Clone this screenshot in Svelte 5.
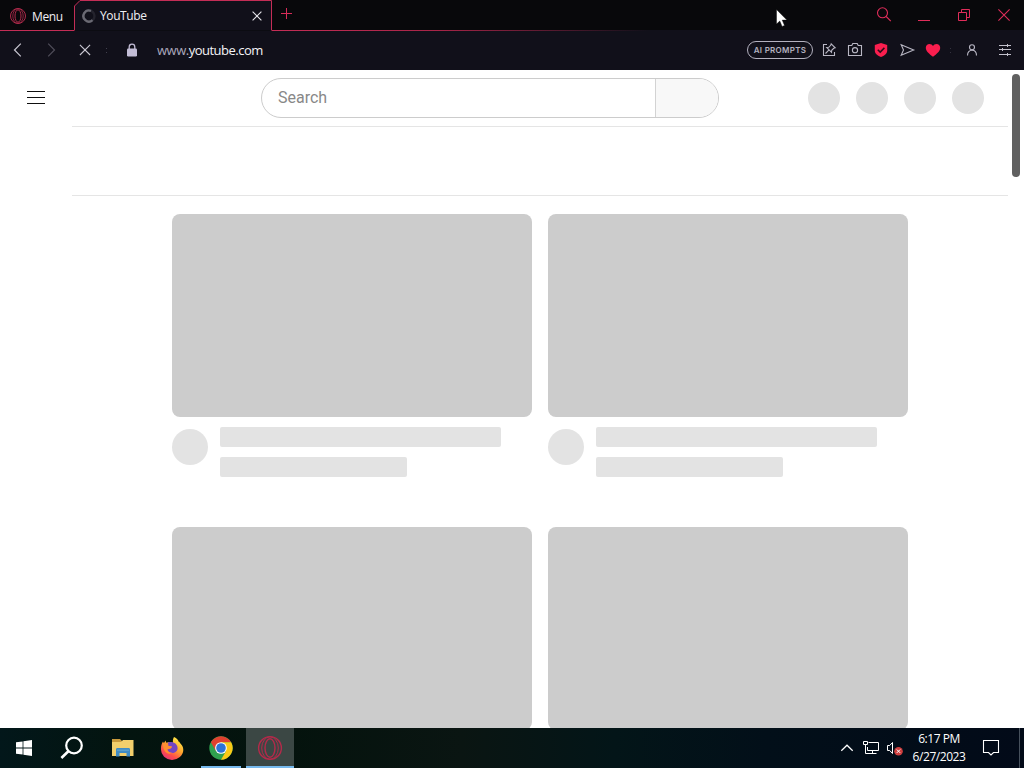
<script lang="ts">
  const videos = [1, 2, 3, 4];
  const headerButtons = [1, 2, 3, 4];
</script>

<div class="screen">
  <div class="tab-strip">
    <div class="menu">
      <svg width="18" height="18" viewBox="0 0 18 18" fill="none" stroke="#b02a4b">
        <circle cx="9" cy="9" r="7.5" />
        <ellipse cx="9" cy="9" rx="5.2" ry="7.3" stroke-width=".8" />
        <ellipse cx="9" cy="9" rx="3" ry="6.2" />
      </svg>
      <span>Menu</span>
    </div>
    <div class="tab">
      <svg class="outline" width="198" height="31" viewBox="0 0 198 31">
        <path d="M.5 30.5V6L6 .5h191.5v30" fill="#11101a" stroke="#c42d56" />
      </svg>
      <svg class="spinner" width="14" height="14" viewBox="0 0 14 14" fill="none" stroke-width="2.4">
        <circle cx="7" cy="7" r="5.5" stroke="#24232d" />
        <path d="M9 1.9A5.5 5.5 0 1 0 10.5 11.2" stroke="#6a6973" />
      </svg>
      <span class="tab-title">YouTube</span>
      <svg class="tab-close" width="10" height="10" viewBox="0 0 10 10" stroke="#e6e5ea" stroke-width="1.1">
        <path d="M.6.6l8.8 8.8M9.4.6L.6 9.4" />
      </svg>
    </div>
    <div class="strip-rest">
      <svg class="new-tab" width="12" height="12" viewBox="0 0 12 12" stroke="#d62c58">
        <path d="M5.5 0v11M0 5.5h11" />
      </svg>
      <div class="window-buttons">
        <svg width="16" height="16" viewBox="0 0 16 16" fill="none" stroke="#e02d5a" stroke-width="1.1">
          <circle cx="6.5" cy="5.8" r="5" />
          <path d="M10.2 9.500l4.600 4.600" />
        </svg>
        <svg width="16" height="16" viewBox="0 0 16 16" stroke="#e02d5a">
          <path d="M2 13.5h12" />
        </svg>
        <svg width="16" height="16" viewBox="0 0 16 16" fill="none" stroke="#e02d5a">
          <path d="M2.5 5.5h8v8h-8zM5.5 5.5v-3h8v8h-3" />
        </svg>
        <svg width="16" height="16" viewBox="0 0 16 16" stroke="#e02d5a" stroke-width="1.1">
          <path d="M2.4 2.4l11.2 11.2M13.6 2.4L2.4 13.6" />
        </svg>
      </div>
    </div>
  </div>

  <div class="toolbar">
    <div class="nav">
      <svg width="20" height="20" viewBox="0 0 20 20" fill="none" stroke="#c9c7d2" stroke-width="1.2">
        <path d="M12.8 3.7L6.5 10l6.3 6.3" />
      </svg>
      <svg width="20" height="20" viewBox="0 0 20 20" fill="none" stroke="#4f4d59" stroke-width="1.2">
        <path d="M7.2 3.7l6.3 6.3-6.3 6.3" />
      </svg>
      <svg width="20" height="20" viewBox="0 0 20 20" stroke="#c9c7d2" stroke-width="1.1">
        <path d="M5.9 4.8L16.100 15M16.100 4.800L5.900 15" />
      </svg>
    </div>
    <span class="dots"></span>
    <svg class="lock" width="12" height="14" viewBox="0 0 12 14">
      <path d="M3.2 6V3.9a2.8 2.8 0 0 1 5.6 0V6" fill="none" stroke="#c3bdd6" stroke-width="1.3" />
      <rect x="1" y="5.5" width="10" height="8" rx="1.2" fill="#c3bdd6" />
    </svg>
    <span class="url"><span class="www">www.</span>youtube.com</span>
    <span class="prompts">AI PROMPTS</span>
    <div class="actions">
      <svg width="20" height="20" viewBox="0 0 20 20" fill="none" stroke="#b9b7c4" stroke-width="1.1">
        <path d="M8 4.500H4.500v11h11V12" />
        <path d="M6.500 13.500l3.300-3.300M12.200 3.800l4 4-1.500.5-2 2-.2 2-4.800-4.800 2-.2 2-2z" />
      </svg>
      <svg width="20" height="20" viewBox="0 0 20 20" fill="none" stroke="#b9b7c4" stroke-width="1.1">
        <path d="M3.500 5.500h3.300l1-2h4.400l1 2h3.300v10h-13z" />
        <circle cx="10" cy="10.200" r="2.600" />
      </svg>
      <svg width="20" height="20" viewBox="0 0 20 20">
        <path d="M10 3l6.200 2v5.500c0 3.300-3 5.200-6.200 6.500-3.200-1.300-6.200-3.200-6.200-6.500V5z" fill="#fa1e4e" />
        <path d="M6.800 9.700l2.400 2.400 4.200-4.200" fill="none" stroke="#2b0d19" stroke-width="1.500" />
      </svg>
      <svg width="20" height="20" viewBox="0 0 20 20" fill="none" stroke="#b9b7c4" stroke-width="1.1">
        <path d="M4.200 4.700L16.700 10 4.200 15.300 6.500 10z" />
      </svg>
      <svg width="20" height="20" viewBox="0 0 20 20">
        <path d="M10 16.800C6.300 13.900 2.800 11.400 2.800 7.800c0-2.200 1.700-3.900 3.700-3.900 1.500 0 2.800.8 3.500 2.100.7-1.300 2-2.100 3.500-2.100 2 0 3.700 1.700 3.700 3.900 0 3.600-3.500 6.100-7.200 9z" fill="#fa1e4e" />
      </svg>
    </div>
    <span class="dots right"></span>
    <svg class="person" width="20" height="20" viewBox="0 0 20 20" fill="none" stroke="#b9b7c4" stroke-width="1.1">
      <circle cx="10" cy="7.200" r="2.500" />
      <path d="M5.500 15.500c0-3.300 1.800-5.300 4.500-5.300s4.500 2 4.500 5.300" />
    </svg>
    <svg class="sliders" width="20" height="20" viewBox="0 0 20 20" stroke="#c3c1cc">
      <path d="M4 5.500h12M4 9.500h12M4 14.500h12M12.500 4v3M7.500 8v3M12.500 13v3" />
    </svg>
  </div>

  <div class="page">
    <header class="masthead">
      <div class="guide"><i></i><i></i><i></i></div>
      <div class="search">
        <span class="search-input">Search</span>
        <span class="search-button"></span>
      </div>
      <div class="header-buttons">
        {#each headerButtons as button (button)}
          <span class="circle"></span>
        {/each}
      </div>
    </header>
    <div class="chips"></div>
    <div class="grid">
      {#each videos as video (video)}
        <div class="video">
          <div class="thumbnail"></div>
          <div class="details">
            <div class="avatar"></div>
            <div class="meta">
              <div class="line"></div>
              <div class="line short"></div>
            </div>
          </div>
        </div>
      {/each}
    </div>
    <div class="scrollbar"></div>
  </div>

  <div class="taskbar">
    <div class="task">
      <svg width="16" height="16" viewBox="0 0 16 16" fill="#fff">
        <path d="M0 2.3l6.600-.9v6.200H0zM7.400 1.300L16 .1v7.500H7.400zM0 8.400h6.600v6.200L0 13.700zM7.400 8.400H16v7.500l-8.600-1.200z" />
      </svg>
    </div>
    <div class="task">
      <svg width="24" height="24" viewBox="0 0 24 24" fill="none" stroke="#fff" stroke-width="2.2">
        <circle cx="14" cy="9.500" r="7.800" />
        <path d="M8.600 15L1.400 22" stroke-width="2.600" />
      </svg>
    </div>
    <div class="task explorer">
      <svg width="24" height="24" viewBox="0 0 24 24">
        <path d="M1 3h8l2 2h11v4H1z" fill="#c99a3c" />
        <path d="M1 6h9l2-2h10.500v16H1z" fill="#f2cf6c" />
        <path d="M5 20.500v-7c0-1 .5-1.500 1.500-1.500h11c1 0 1.500.5 1.500 1.500v7h-3.500V17h-7v3.500z" fill="#3f8cc4" />
        <path d="M6 13.500h12V15H6z" fill="#5a9fcb" />
      </svg>
    </div>
    <div class="task">
      <svg width="24" height="24" viewBox="0 0 24 24">
        <defs>
          <linearGradient id="fox" x1=".85" y1=".05" x2=".25" y2="1">
            <stop offset="0" stop-color="#fff04a" />
            <stop offset=".45" stop-color="#ffa32e" />
            <stop offset=".75" stop-color="#ff4d4a" />
            <stop offset="1" stop-color="#e3347b" />
          </linearGradient>
        </defs>
        <path d="M14 1c3 1.300 4.200 3 4.500 4.500 1 .3 1 .5 1.300 1.300C22 9 23.300 11 23.300 14A11 10 0 0 1 1 13.500C.8 10.500 1.600 7.600 3 5.500c.3.800.6 1.200 1 1.500L5.500 4.500l.8 2.200L9 6c2 0 3 .5 4 1.200C12.700 4.500 13 2.500 14 1z" fill="url(#fox)" />
        <path d="M8 6.500c4.500-1.500 9.300.7 9.600 5.500 0 3.300-2.800 5-5.300 5-3.500 0-5-2.500-4.800-4.500 1.700 1 3.600.2 4.500-.9-1.500-.2-3.300-.8-3.900-1.600-.6-1-.5-2.500-.1-3.500z" fill="#7446c4" />
        <path d="M3 7.500c1.500-.8 3.700-.8 5.300 0l-.1 2.100c1 .7 2.600.6 4 .8-.3 1.200-1.800 1.500-2.800 2.100-1 .7-1.500 1.100-2.400.8 1 2.700 3 3.600 5.500 3.500-4.800 2.500-9.500-.7-9.500-9.300z" fill="#ff8f30" />
      </svg>
    </div>
    <div class="task chrome">
      <svg width="24" height="24" viewBox="0 0 24 24">
        <circle cx="12" cy="12" r="11.700" fill="#2fa14f" />
        <path d="M1.900 6.150A11.700 11.700 0 0 1 22.130 6.150H12L6.940 14.920z" fill="#e0402f" />
        <path d="M22.130 6.150A11.700 11.700 0 0 1 12 23.700L17.060 14.920 12 6.150z" fill="#fbc917" />
        <circle cx="12" cy="12" r="5.850" fill="#fff" />
        <circle cx="12" cy="12" r="4.800" fill="#2d73d8" />
      </svg>
    </div>
    <div class="task active">
      <svg width="26" height="26" viewBox="0 0 26 26" fill="none" stroke="#b42a4a">
        <circle cx="13" cy="13" r="11.400" stroke-width="1.400" />
        <ellipse cx="13" cy="13" rx="8.300" ry="11.200" />
        <ellipse cx="13" cy="13" rx="5" ry="9.200" stroke-width="1.400" />
      </svg>
    </div>
    <div class="tray">
      <svg width="14" height="10" viewBox="0 0 14 10" fill="none" stroke="#fff" stroke-width="1.200">
        <path d="M1.300 7.800L7 2.200l5.700 5.600" />
      </svg>
      <svg width="18" height="16" viewBox="0 0 18 16" fill="none" stroke="#fff">
        <path d="M6.500 2.500h10v8h-11V7M10.500 10.500v3M6.500 13.500h8M1.500 1.500h4v3h-4zM3.500 4.500v9H7" />
      </svg>
      <svg width="18" height="16" viewBox="0 0 18 16" fill="none" stroke="#fff">
        <path d="M1.500 5.500h2.200L6.500 2.500v11L3.700 10.500H1.500z" />
        <circle cx="12.500" cy="11.200" r="4.300" fill="#cf3f3f" stroke="none" />
        <path d="M10.800 9.500l3.400 3.400M14.200 9.500l-3.400 3.400" />
      </svg>
    </div>
    <div class="clock">
      <span>6:17 PM</span>
      <span class="date">6/27/2023</span>
    </div>
    <svg class="notifications" width="18" height="18" viewBox="0 0 18 18" fill="none" stroke="#fff" stroke-width="1.100">
      <path d="M1.500 1.500h15v12H11.500L9 16l-2.500-2.500h-5z" />
    </svg>
    <div class="peek"></div>
  </div>

  <svg class="cursor" width="12" height="19" viewBox="0 0 12 19">
    <path d="M.5.500v14.600l3.300-3.100 2.300 5.400 2.400-1-2.300-5.300h4.700z" fill="#fff" stroke="#000" stroke-width=".4" />
  </svg>
</div>

<style>
  :global(body) {
    margin: 0;
    overflow: hidden;
  }

  .screen {
    position: relative;
    width: 1024px;
    height: 768px;
    display: flex;
    flex-direction: column;
    overflow: hidden;
    background: #fff;
    font-family: "Open Sans", "Noto Sans", sans-serif;
    font-size: 12px;
  }

  .screen *,
  .screen {
    box-sizing: border-box;
  }

  svg {
    display: block;
    flex: none;
  }

  .tab-strip {
    height: 31px;
    flex: none;
    display: flex;
    background: #08080b;
    color: #f0eff3;
  }

  .menu {
    width: 74px;
    display: flex;
    align-items: center;
    gap: 5px;
    padding: 2px 0 0 9px;
    border-bottom: 1px solid #c42d56;
    letter-spacing: -0.4px;
  }

  .tab {
    position: relative;
    width: 198px;
    display: flex;
    align-items: center;
    padding: 0 10px 0 8px;
  }

  .outline {
    position: absolute;
    left: 0;
    top: 0;
  }

  .spinner,
  .tab-title,
  .tab-close {
    position: relative;
  }

  .tab-title {
    flex: 1;
    margin-left: 4px;
    letter-spacing: -0.4px;
  }

  .strip-rest {
    flex: 1;
    display: flex;
    justify-content: space-between;
    padding: 0 12px 0 9px;
    background: linear-gradient(90deg, #c42d56, #a82548 22%, #11101a 50%) bottom / 100% 1px no-repeat;
  }

  .new-tab {
    margin-top: 8px;
  }

  .window-buttons {
    display: flex;
    gap: 24px;
    padding-top: 7px;
  }

  .toolbar {
    height: 39px;
    flex: none;
    display: flex;
    align-items: center;
    padding: 0 9px 1px 8px;
    background: #11101a;
    color: #f4f3f7;
  }

  .nav {
    display: flex;
    gap: 13px;
  }

  .dots {
    width: 1px;
    height: 5px;
    margin-left: 12px;
    border-top: 1px solid #42404e;
    border-bottom: 1px solid #42404e;
  }

  .lock {
    margin-left: 19px;
  }

  .url {
    flex: 1;
    margin-left: 19px;
    font-size: 13px;
    letter-spacing: -0.5px;
  }

  .www {
    color: #aaa7bb;
  }

  .prompts {
    width: 66px;
    height: 18px;
    border: 1px solid #b3b1bf;
    border-radius: 9px;
    font: 600 8px/16px Inter, sans-serif;
    letter-spacing: 0.3px;
    text-align: center;
    color: #b3b1bf;
  }

  .actions {
    display: flex;
    gap: 6px;
    margin-left: 6px;
  }

  .dots.right {
    margin-left: 7px;
    border-color: #34323f;
  }

  .person {
    margin-left: 11px;
  }

  .sliders {
    margin-left: 13px;
  }

  .page {
    position: relative;
    flex: 1;
    min-height: 0;
    overflow: hidden;
    background: #fff;
  }

  .masthead {
    height: 56px;
    display: flex;
    align-items: center;
    padding: 0 40px 0 27px;
  }

  .guide {
    width: 18px;
    display: grid;
    gap: 5px;
    margin-bottom: 1px;
  }

  .guide i {
    height: 1px;
    background: #0f0f0f;
  }

  .search {
    width: 458px;
    height: 40px;
    display: flex;
    margin-left: 216px;
    border: 1px solid #ccc;
    border-radius: 20px;
    overflow: hidden;
    font: 16px/37px Roboto, sans-serif;
    color: #888;
  }

  .search-input {
    flex: 1;
    padding-left: 16px;
  }

  .search-button {
    width: 63px;
    border-left: 1px solid #d3d3d3;
    background: #f8f8f8;
  }

  .header-buttons {
    display: flex;
    gap: 16px;
    margin-left: auto;
  }

  .circle {
    width: 32px;
    height: 32px;
    border-radius: 50%;
    background: #e3e3e3;
  }

  .chips {
    height: 70px;
    margin: 0 16px 0 72px;
    border: solid #e5e5e5;
    border-width: 1px 0;
  }

  .grid {
    display: grid;
    grid-template-columns: 360px 360px;
    gap: 0 16px;
    padding: 18px 0 0 172px;
  }

  .video {
    height: 313px;
  }

  .thumbnail {
    height: 203px;
    border-radius: 8px;
    background: #ccc;
  }

  .details {
    display: flex;
    gap: 12px;
    padding-top: 10px;
  }

  .avatar {
    width: 36px;
    height: 36px;
    margin-top: 2px;
    border-radius: 50%;
    background: #e3e3e3;
  }

  .meta {
    display: grid;
    gap: 10px;
  }

  .line {
    width: 281px;
    height: 20px;
    border-radius: 2px;
    background: #e3e3e3;
  }

  .line.short {
    width: 187px;
  }

  /* overlays the page content at the right edge */
  .scrollbar {
    position: absolute;
    top: 4px;
    right: 4px;
    width: 8px;
    height: 103px;
    border-radius: 4px;
    background: #606060;
  }

  .taskbar {
    height: 40px;
    flex: none;
    display: flex;
    align-items: center;
    background: linear-gradient(90deg, #02171a, #03140f 12%, #04130d 28%, #0a1512 45%, #031518 60%, #020f19 75%, #020a18);
    color: #fff;
  }

  .task {
    width: 48px;
    height: 40px;
    display: flex;
    align-items: center;
    justify-content: center;
    margin-right: 1px;
  }

  .task:first-child {
    margin-right: 0;
  }

  .task.explorer {
    margin-left: 2px;
  }

  .task.chrome {
    background: linear-gradient(#76b9ed, #76b9ed) bottom / 40px 2px no-repeat;
  }

  .task.active {
    background: linear-gradient(#76b9ed, #76b9ed) bottom / 48px 2px no-repeat #3b4744;
  }

  .tray {
    display: flex;
    align-items: center;
    gap: 8px;
    margin-left: auto;
  }

  .tray svg:last-child {
    margin-left: -2px;
  }

  .clock {
    width: 70px;
    display: flex;
    flex-direction: column;
    align-items: center;
    line-height: 18px;
    letter-spacing: -0.45px;
  }

  .notifications {
    margin: 0 19px 0 8px;
  }

  .peek {
    width: 5px;
    height: 40px;
    border-left: 1px solid #46505c;
  }

  .cursor {
    position: absolute;
    left: 776px;
    top: 9px;
  }
</style>
